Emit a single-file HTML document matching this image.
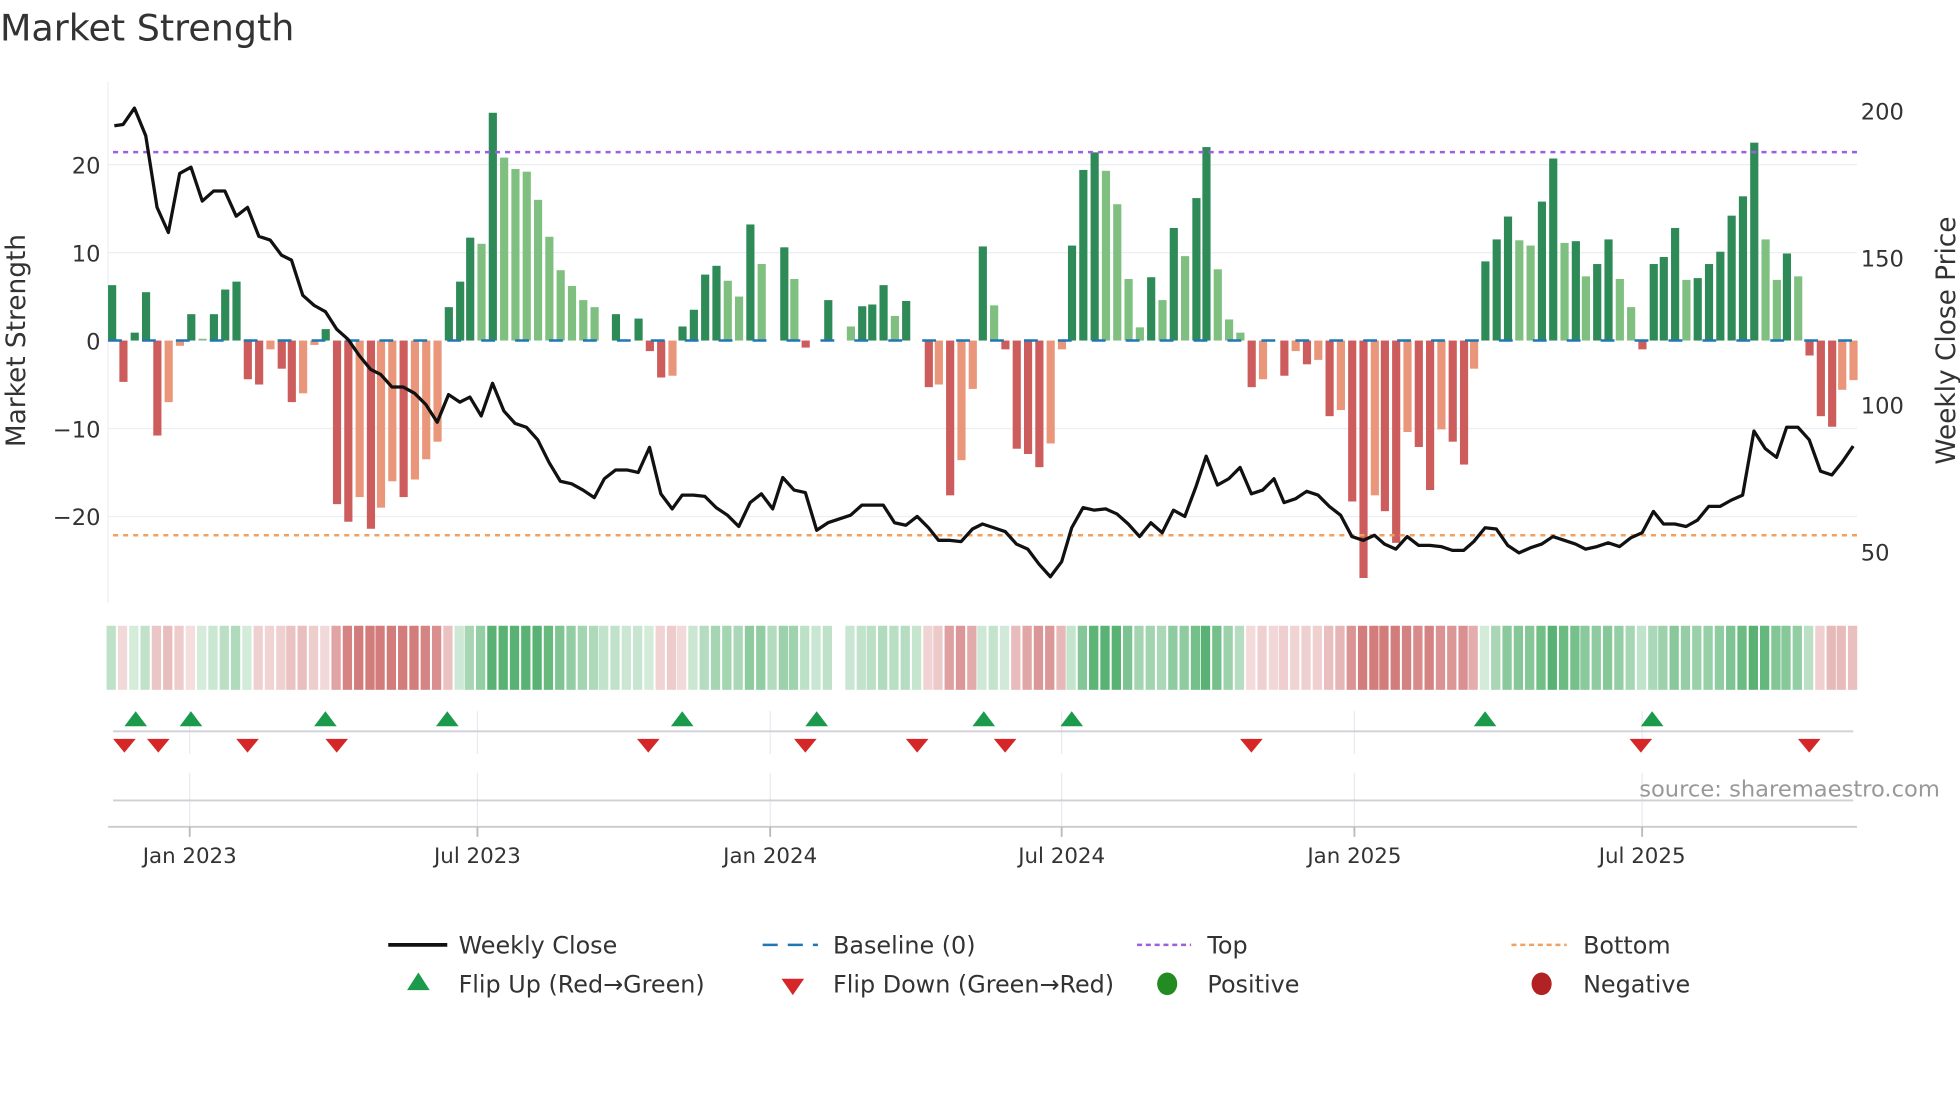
<!DOCTYPE html>
<html><head><meta charset="utf-8">
<style>
html,body{margin:0;padding:0;background:#fff;}
svg{display:block;font-family:"DejaVu Sans","Liberation Sans",sans-serif;}
</style></head>
<body>
<svg id="s" width="1960" height="1102" viewBox="0 0 1560 877" xmlns="http://www.w3.org/2000/svg">
<text x="0" y="32" font-size="29" fill="#333">Market Strength</text>
<g stroke="#eceef3" stroke-width="1">
<line x1="86" x2="1478" y1="131" y2="131"/><line x1="86" x2="1478" y1="201" y2="201"/>
<line x1="86" x2="1478" y1="341" y2="341"/><line x1="86" x2="1478" y1="411" y2="411"/>
<line x1="86" x2="86" y1="65" y2="480"/>
</g>
<g font-size="18" fill="#333" text-anchor="end">
<text x="80" y="138">20</text><text x="80" y="208">10</text><text x="80" y="278">0</text>
<text x="80" y="348">−10</text><text x="80" y="418">−20</text>
</g>
<g font-size="18" fill="#333">
<text x="1481" y="95">200</text><text x="1481" y="212">150</text><text x="1481" y="329">100</text><text x="1481" y="446">50</text>
</g>
<text transform="translate(20,271) rotate(-90)" font-size="21" fill="#333" text-anchor="middle">Market Strength</text>
<text transform="translate(1556,271) rotate(-90)" font-size="21" fill="#333" text-anchor="middle">Weekly Close Price</text>
<g id="bars"></g>
<line x1="86" x2="1478" y1="271" y2="271" stroke="#1f77b4" stroke-width="2" stroke-dasharray="11,16"/>
<line x1="90" x2="1478" y1="121" y2="121" stroke="#9b5fe0" stroke-width="2" stroke-dasharray="4,4"/>
<line x1="90" x2="1478" y1="426" y2="426" stroke="#f0a060" stroke-width="2" stroke-dasharray="4,4"/>
<polyline id="price" fill="none" stroke="#111" stroke-width="2.6" stroke-linejoin="round"/>
<g id="heat"></g>
<g stroke="#e8eaf0" stroke-width="1">
<line x1="151" x2="151" y1="566" y2="600"/><line x1="380" x2="380" y1="566" y2="600"/><line x1="613" x2="613" y1="566" y2="600"/><line x1="845" x2="845" y1="566" y2="600"/><line x1="1078" x2="1078" y1="566" y2="600"/><line x1="1307" x2="1307" y1="566" y2="600"/>
<line x1="151" x2="151" y1="615" y2="658"/><line x1="380" x2="380" y1="615" y2="658"/><line x1="613" x2="613" y1="615" y2="658"/><line x1="845" x2="845" y1="615" y2="658"/><line x1="1078" x2="1078" y1="615" y2="658"/><line x1="1307" x2="1307" y1="615" y2="658"/>
</g>
<line x1="90" x2="1475" y1="582" y2="582" stroke="#d0d0d6" stroke-width="1.5"/>
<line x1="90" x2="1475" y1="637" y2="637" stroke="#d0d0d6" stroke-width="1.5"/>
<line x1="86" x2="1478" y1="658" y2="658" stroke="#ccc" stroke-width="1.5"/>
<g stroke="#bbb" stroke-width="1.5">
<line x1="151" x2="151" y1="658" y2="666"/><line x1="380" x2="380" y1="658" y2="666"/><line x1="613" x2="613" y1="658" y2="666"/><line x1="845" x2="845" y1="658" y2="666"/><line x1="1078" x2="1078" y1="658" y2="666"/><line x1="1307" x2="1307" y1="658" y2="666"/>
</g>
<g id="flips"></g>
<text x="1544" y="634" font-size="18" fill="#999" text-anchor="end">source: sharemaestro.com</text>
<g font-size="17" fill="#333" text-anchor="middle">
<text x="151" y="687">Jan 2023</text><text x="380" y="687">Jul 2023</text><text x="613" y="687">Jan 2024</text>
<text x="845" y="687">Jul 2024</text><text x="1078" y="687">Jan 2025</text><text x="1307" y="687">Jul 2025</text>
</g>
<g font-size="19" fill="#333">
<line x1="309" x2="356" y1="752" y2="752" stroke="#111" stroke-width="3"/><text x="365" y="759">Weekly Close</text>
<line x1="607" x2="651" y1="752" y2="752" stroke="#1f77b4" stroke-width="2" stroke-dasharray="12,8"/><text x="663" y="759">Baseline (0)</text>
<line x1="905" x2="948" y1="752" y2="752" stroke="#9b5fe0" stroke-width="2" stroke-dasharray="4,3"/><text x="961" y="759">Top</text>
<line x1="1203" x2="1247" y1="752" y2="752" stroke="#f0a060" stroke-width="2" stroke-dasharray="4,3"/><text x="1260" y="759">Bottom</text>
<polygon points="333,774 324,788 342,788" fill="#1a9a4a"/><text x="365" y="790">Flip Up (Red→Green)</text>
<polygon points="622,779 640,779 631,792" fill="#d62728"/><text x="663" y="790">Flip Down (Green→Red)</text>
<ellipse cx="929" cy="783" rx="8" ry="9" fill="#228b22"/><text x="961" y="790">Positive</text>
<ellipse cx="1227" cy="783" rx="8" ry="9" fill="#b22222"/><text x="1260" y="790">Negative</text>
</g>
<script>
var NS="http://www.w3.org/2000/svg";
function el(t,a,p){var e=document.createElementNS(NS,t);for(var k in a)e.setAttribute(k,a[k]);p.appendChild(e);return e;}
var D=[[89,6.3,'G'],[98,-4.7,'R'],[107,0.9,'G'],[116,5.5,'G'],[125,-10.8,'R'],[134,-7,'r'],[143,-0.6,'r'],[152,3,'G'],[161,0.2,'g'],[170,3,'G'],[179,5.8,'G'],[188,6.7,'G'],[197,-4.4,'R'],[206,-5,'R'],[215,-1,'r'],[224,-3.2,'R'],[232,-7,'R'],[241,-6,'r'],[250,-0.5,'r'],[259,1.3,'G'],[268,-18.6,'R'],[277,-20.6,'R'],[286,-17.8,'r'],[295,-21.4,'R'],[303,-19,'r'],[312,-16,'r'],[321,-17.8,'R'],[330,-15.8,'r'],[339,-13.5,'r'],[348,-11.5,'r'],[357,3.8,'G'],[366,6.7,'G'],[374,11.7,'G'],[383,11,'g'],[392,25.9,'G'],[401,20.8,'g'],[410,19.5,'g'],[419,19.2,'g'],[428,16,'g'],[437,11.8,'g'],[446,8,'g'],[455,6.2,'g'],[464,4.6,'g'],[473,3.8,'g'],[481,0,'g'],[490,3,'G'],[499,0,'g'],[508,2.5,'G'],[517,-1.2,'R'],[526,-4.2,'R'],[535,-4,'r'],[543,1.6,'G'],[552,3.5,'G'],[561,7.5,'G'],[570,8.5,'G'],[579,6.8,'g'],[588,5,'g'],[597,13.2,'G'],[606,8.7,'g'],[615,0,'g'],[624,10.6,'G'],[632,7,'g'],[641,-0.8,'R'],[650,0,'g'],[659,4.6,'G'],[668,0,'g'],[677,1.6,'g'],[686,3.9,'G'],[694,4.1,'G'],[703,6.3,'G'],[712,2.8,'g'],[721,4.5,'G'],[730,0,'r'],[739,-5.3,'R'],[747,-5,'r'],[756,-17.6,'R'],[765,-13.6,'r'],[774,-5.5,'r'],[782,10.7,'G'],[791,4,'g'],[800,-1,'R'],[809,-12.3,'R'],[818,-12.9,'R'],[827,-14.4,'R'],[836,-11.7,'r'],[845,-1,'r'],[853,10.8,'G'],[862,19.4,'G'],[871,21.4,'G'],[880,19.3,'g'],[889,15.5,'g'],[898,7,'g'],[907,1.5,'g'],[916,7.2,'G'],[925,4.6,'g'],[934,12.8,'G'],[943,9.6,'g'],[952,16.2,'G'],[960,22,'G'],[969,8.1,'g'],[978,2.4,'g'],[987,0.9,'g'],[996,-5.3,'R'],[1005,-4.4,'r'],[1014,0,'r'],[1022,-4,'R'],[1031,-1.2,'r'],[1040,-2.7,'R'],[1049,-2.2,'r'],[1058,-8.6,'R'],[1067,-7.9,'r'],[1076,-18.3,'R'],[1085,-27,'R'],[1094,-17.6,'r'],[1102,-19.4,'R'],[1111,-23,'R'],[1120,-10.4,'r'],[1129,-12.1,'R'],[1138,-17,'R'],[1147,-10.1,'r'],[1156,-11.5,'R'],[1165,-14.1,'R'],[1173,-3.2,'r'],[1182,9,'G'],[1191,11.5,'G'],[1200,14.1,'G'],[1209,11.4,'g'],[1218,10.8,'g'],[1227,15.8,'G'],[1236,20.7,'G'],[1245,11.1,'g'],[1254,11.3,'G'],[1262,7.3,'g'],[1271,8.7,'G'],[1280,11.5,'G'],[1289,7,'g'],[1298,3.8,'g'],[1307,-1,'R'],[1316,8.7,'G'],[1324,9.5,'G'],[1333,12.8,'G'],[1342,6.9,'g'],[1351,7.1,'G'],[1360,8.7,'G'],[1369,10.1,'G'],[1378,14.2,'G'],[1387,16.4,'G'],[1396,22.5,'G'],[1405,11.5,'g'],[1414,6.9,'g'],[1422,9.9,'G'],[1431,7.3,'g'],[1440,-1.7,'R'],[1449,-8.6,'R'],[1458,-9.8,'R'],[1466,-5.6,'r'],[1475,-4.5,'r']];
var C={G:'#2e8b57',g:'#7fbf7f',R:'#cd5c5c',r:'#e9967a'};
var B=document.getElementById('bars'),H=document.getElementById('heat');
D.forEach(function(d){var h=Math.abs(d[1])*7;if(h<0.5)return;var y=d[1]>0?271-h:271;el('rect',{x:d[0]-3,y:y,width:6.5,height:h,fill:C[d[2]]},B);});
var prev=0;
D.forEach(function(d,i){var v=prev*0.5+d[1]*0.5;prev=v;if(d[0]>=663&&d[0]<=671)return;var a=Math.min(1,0.25+Math.abs(v)/22);
var col=v>=0?'rgba(60,165,90,'+(a*0.85)+')':'rgba(195,80,80,'+(a*0.75)+')';el('rect',{x:d[0]-4.2,y:498,width:7.4,height:51,fill:col},H);});
var P="91,100 98,99 107,86 116,108 125,165 134,185 143,138 152,133 161,160 170,152 179,152 188,172 197,165 206,188 215,191 224,203 232,207 241,235 250,243 259,248 268,262 277,270 286,283 295,294 303,298 312,308 321,308 330,313 339,322 348,336 357,314 366,320 374,316 383,331 392,305 401,327 410,337 419,340 428,350 437,368 446,383 455,385 464,390 473,396 481,381 490,374 499,374 508,376 517,356 526,393 535,405 543,394 552,394 561,395 570,404 579,410 588,419 597,400 606,393 615,405 623,380 632,390 641,392 650,422 659,416 668,413 677,410 686,402 694,402 703,402 712,416 721,418 730,411 739,420 747,430 756,430 765,431 774,421 782,417 791,420 800,423 809,433 818,437 827,449 836,459 845,447 853,420 862,404 871,406 880,405 889,409 898,417 907,427 916,416 925,424 934,406 943,411 952,387 960,363 969,386 978,381 987,372 996,393 1005,390 1014,381 1022,400 1031,397 1040,391 1049,394 1058,403 1067,410 1076,427 1085,430 1094,426 1102,433 1111,437 1120,427 1129,434 1138,434 1147,435 1156,438 1165,438 1173,431 1182,420 1191,421 1200,434 1209,440 1218,436 1227,433 1236,427 1245,430 1254,433 1262,437 1271,435 1280,432 1289,435 1298,428 1307,424 1316,407 1324,417 1333,417 1342,419 1351,414 1360,403 1369,403 1378,398 1387,394 1396,343 1405,357 1414,364 1422,340 1431,340 1440,350 1449,375 1458,378 1466,368 1475,355";
document.getElementById('price').setAttribute('points',P);
var F=document.getElementById('flips');
[108,152,259,356,543,650,783,853,1182,1315].forEach(function(x){el('polygon',{points:(x)+',566 '+(x-9)+',578 '+(x+9)+',578',fill:'#1a9a4a'},F);});
[99,126,197,268,516,641,730,800,996,1306,1440].forEach(function(x){el('polygon',{points:(x-9)+',588 '+(x+9)+',588 '+x+',599',fill:'#d62728'},F);});
</script>
</svg>
</body></html>
